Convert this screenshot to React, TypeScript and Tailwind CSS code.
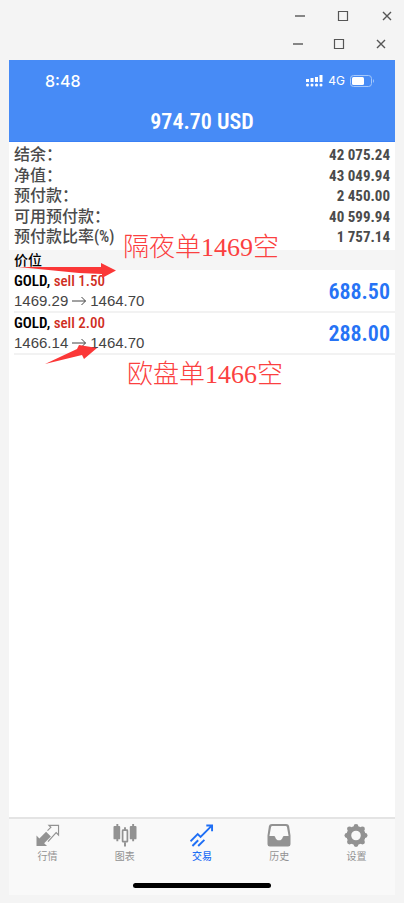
import type { ReactNode } from "react";

const condensed = "font-['Roboto_Condensed','Noto_Sans_CJK_SC',sans-serif]";

function WindowButtons({ spacing }: { spacing: string }) {
  return (
    <div className={`flex h-7 items-center justify-end text-[#555] ${spacing}`}>
      <button type="button" aria-label="Minimize" className="h-3 w-3">
        <svg viewBox="0 0 12 12" className="h-3 w-3" stroke="currentColor" strokeWidth="1.4"><path d="M2 6h10" /></svg>
      </button>
      <button type="button" aria-label="Maximize" className="h-3 w-3">
        <svg viewBox="0 0 12 12" className="h-3 w-3" fill="none" stroke="currentColor" strokeWidth="1.2"><path d="M1.5 1.5h9v9h-9z" /></svg>
      </button>
      <button type="button" aria-label="Close" className="h-3 w-3">
        <svg viewBox="0 0 12 12" className="h-3 w-3" stroke="currentColor" strokeWidth="1.4"><path d="M2 2l8 8M10 2l-8 8" /></svg>
      </button>
    </div>
  );
}

const balances = [
  ["结余：", "42 075.24"],
  ["净值：", "43 049.94"],
  ["预付款：", "2 450.00"],
  ["可用预付款：", "40 599.94"],
  ["预付款比率(%)", "1 757.14"],
];

const positions = [
  { side: "sell 1.50", open: "1469.29", now: "1464.70", profit: "688.50" },
  { side: "sell 2.00", open: "1466.14", now: "1464.70", profit: "288.00" },
];

const tabs: { label: string; active?: boolean; icon: ReactNode }[] = [
  {
    label: "行情",
    icon: (
      <>
        <path d="M0 23V12l3 3 7-7 5 5-7 7 3 3z" fill="currentColor" />
        <path d="M11.5 7l3.500-3.500L13 1.500H23v10L20.500 9 12 18.500" fill="none" stroke="currentColor" strokeWidth="1.200" />
      </>
    ),
  },
  {
    label: "图表",
    icon: (
      <>
        <path d="M3 0h2v2h1q1 0 1 1v12q0 1-1 1H5v2H3v-2H1q-1 0-1-1V3q0-1 1-1h2zM19.500 0h2v2H23q1 0 1 1v12q0 1-1 1h-1.500v2h-2v-2H18q-1 0-1-1V3q0-1 1-1h1.500zM11 3.500h2v3h-2zM11 19h2v4.500h-2z" fill="currentColor" />
        <rect x="9.500" y="6.500" width="5" height="12" rx=".5" fill="none" stroke="currentColor" strokeWidth="1.800" />
      </>
    ),
  },
  {
    label: "交易",
    active: true,
    icon: (
      <path d="M0 18l7.500-7.500 3 3L22 2M16.500 1.500H22.500v6M2 23l6-6M8 23l6.500-6.500" fill="none" stroke="currentColor" strokeWidth="2" />
    ),
  },
  {
    label: "历史",
    icon: (
      <path fillRule="evenodd" d="M4.500 0h15q2.500 0 3 2L24 12v9q0 2.500-2.500 2.500h-19Q0 23.500 0 21v-9L1.500 2Q2 0 4.500 0zM5 2q-1 0-1.300 1L2 12.500h4.500q1.500 0 1.500 1 1 3.500 4 3.500t4-3.500q0-1 1.500-1H22L20.300 3Q20 2 19 2z" fill="currentColor" />
    ),
  },
  {
    label: "设置",
    icon: (
      <>
        <circle cx="12" cy="12" r="7.500" fill="none" stroke="currentColor" strokeWidth="5" />
        <g fill="currentColor">
          <circle cx="12" cy="2.500" r="2.500" /><circle cx="12" cy="21.500" r="2.500" />
          <circle cx="2.500" cy="12" r="2.500" /><circle cx="21.500" cy="12" r="2.500" />
          <circle cx="5.300" cy="5.300" r="2.600" /><circle cx="18.700" cy="5.300" r="2.600" />
          <circle cx="5.300" cy="18.700" r="2.600" /><circle cx="18.700" cy="18.700" r="2.600" />
        </g>
      </>
    ),
  },
];

export default function App() {
  return (
    <div className="relative min-h-screen bg-[#f4f4f4] px-[9px] pt-0.5 pb-2 font-['Liberation_Sans','Noto_Sans_CJK_SC',sans-serif]">
      <div className="h-[58px]">
        <WindowButtons spacing="gap-8 pr-0.5" />
        <WindowButtons spacing="gap-[30px] pr-2" />
      </div>

      <main className="flex min-h-[835px] flex-col bg-white">
        <header className="h-[82px] border-b border-[#3a80f5] bg-[#478bf6] text-white">
          <div className="flex h-[42px] items-center justify-between pr-5 pl-9">
            <span className="font-['Inter',sans-serif] text-base font-medium">8:48</span>
            <div className="flex items-center gap-[5px]">
              <svg viewBox="0 0 17 12" className="h-3 w-[17px]" fill="white">
                <path d="M0 4h3v3H0zM4.500 3h3v4h-3zM9 2h3v5H9zM13.500 0h3v7h-3z" />
                <circle cx="1.500" cy="10" r="1.500" /><circle cx="6" cy="10" r="1.500" /><circle cx="10.500" cy="10" r="1.500" /><circle cx="15" cy="10" r="1.500" />
              </svg>
              <span className="font-['Inter',sans-serif] text-xs">4G</span>
              <svg viewBox="0 0 25 12" className="h-3 w-[25px]">
                <rect x=".500" y=".500" width="21" height="11" rx="3" fill="none" stroke="#a5c8fb" />
                <rect x="2" y="2" width="12" height="8" rx="1.500" fill="white" />
                <path d="M23 4q2 2 0 4z" fill="#a5c8fb" />
              </svg>
            </div>
          </div>
          <h1 className={`text-center text-[22px] leading-10 font-semibold ${condensed}`}>974.70 USD</h1>
        </header>

        <dl className="flex h-[108px] flex-col justify-between px-[5px] py-[3px] text-[#4b4b4b]">
          {balances.map(([label, value]) => (
            <div key={label} className={`flex h-5 items-center justify-between leading-5 ${condensed}`}>
              <dt className="text-base font-medium">{label}</dt>
              <dd className="text-[15px] font-bold">{value}</dd>
            </div>
          ))}
        </dl>

        <h2 className="h-5 bg-[#f5f5f5] px-[5px] text-sm leading-5 font-medium text-black">价位</h2>

        <ul className="pt-px">
          {positions.map((p) => (
            <li key={p.profit} className="ml-[5px] flex h-[42px] items-center justify-between border-b-2 border-[#f2f2f2] pr-[5px]">
              <div>
                <p className={`text-[15px] leading-5 font-semibold text-black ${condensed}`}>
                  GOLD, <span className="font-medium text-[#cf2e1f]">{p.side}</span>
                </p>
                <p className="flex items-center gap-1 text-[15px] leading-5 text-[#444]">
                  {p.open}
                  <svg viewBox="0 0 14 10" className="h-2.5 w-3.5" fill="none" stroke="currentColor" role="img" aria-label="to"><path d="M0 5h13.500M9.500 1l4 4-4 4" /></svg>
                  {p.now}
                </p>
              </div>
              <strong className={`pt-0.5 text-[22px] leading-10 font-semibold text-[#2673f5] ${condensed}`}>{p.profit}</strong>
            </li>
          ))}
        </ul>

        <footer className="mt-auto h-[78px] border-t-2 border-[#e4e4e4] bg-[#f9f9f9]">
          <nav className="grid grid-cols-5">
            {tabs.map((tab) => (
              <button key={tab.label} type="button" className={`flex flex-col items-center pt-[5px] ${tab.active ? "font-medium text-[#1f6ff5]" : "text-[#929292]"}`}>
                <svg viewBox="0 0 24 24" className="h-[23px] w-6">{tab.icon}</svg>
                <span className="text-[10px] leading-5">{tab.label}</span>
              </button>
            ))}
          </nav>
          <div className="mx-auto mt-4 h-[5px] w-[138px] rounded-full bg-black" />
        </footer>
      </main>

      <svg className="pointer-events-none absolute top-[260px] left-[15px] h-[110px] w-[104px]" viewBox="0 0 104 110" fill="#fb3737">
        <path d="M3 7L86 7V3L101 10.500 87 18V14L64 13z" />
        <path d="M30 104L62 89 64 85 82 88 69 99 67 95z" />
      </svg>
      <p className="absolute top-[232px] left-[123px] font-['Liberation_Serif','Noto_Sans_CJK_SC',serif] text-[26px] leading-8 font-light text-[#fb4040]">隔夜单1469空</p>
      <p className="absolute top-[359px] left-[127px] font-['Liberation_Serif','Noto_Sans_CJK_SC',serif] text-[26px] leading-8 font-light text-[#fb4040]">欧盘单1466空</p>
    </div>
  );
}
